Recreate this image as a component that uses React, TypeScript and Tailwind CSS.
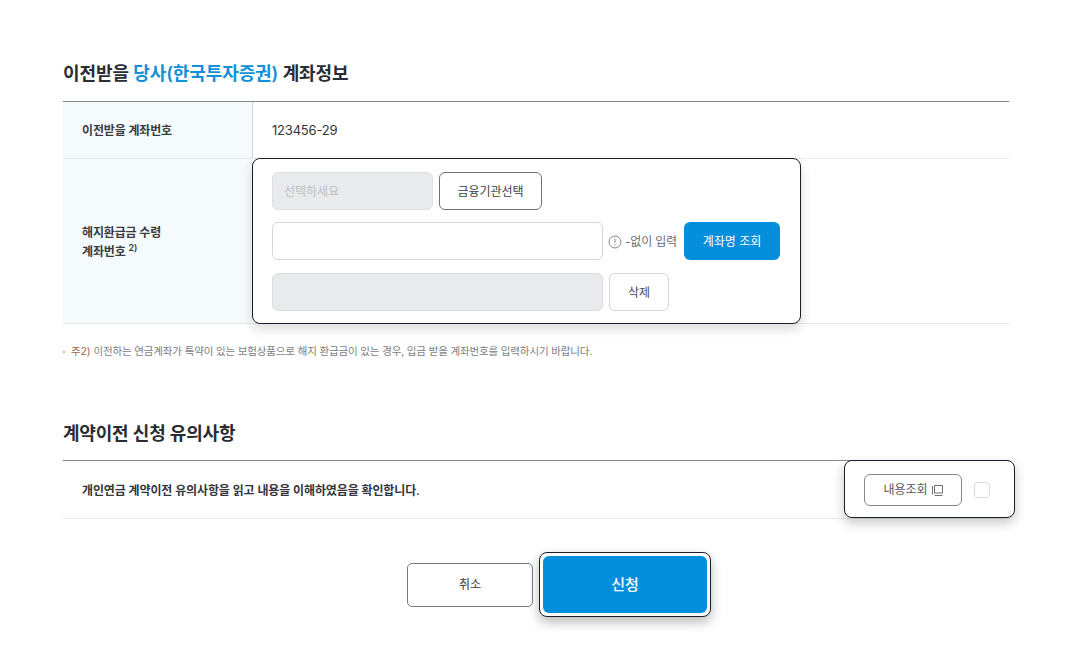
const fontStack = "font-['Inter','Noto_Sans_CJK_KR',sans-serif]";

function InfoIcon() {
  return (
    <svg width="14" height="14" viewBox="0 0 14 14" fill="none" className="shrink-0">
      <circle cx="7" cy="7" r="6" stroke="#85888f" strokeWidth="1" />
      <path d="M7 3.6v4.2" stroke="#85888f" strokeWidth="1" />
      <path d="M7 9.2v1.2" stroke="#85888f" strokeWidth="1" />
    </svg>
  );
}

function CopyIcon() {
  return (
    <svg width="11" height="11" viewBox="0 0 11 11" fill="none" className="shrink-0">
      <path d="M0.5 1v8.5" stroke="#70737a" strokeWidth="1" />
      <rect x="2.5" y="0.5" width="8" height="7.5" stroke="#70737a" strokeWidth="1" />
      <path d="M2.5 10.5h8" stroke="#70737a" strokeWidth="1" />
    </svg>
  );
}

export default function App() {
  return (
    <div className={`${fontStack} h-[670px] w-[1072px] overflow-hidden bg-white px-[63px] pt-[60px] text-[#26282e]`}>
      <h2 className="h-[28px] text-[18px] font-semibold leading-[28px] tracking-[-0.1px] text-[#2a2c33]">
        이전받을 <span className="text-[#1290da]">당사(한국투자증권)</span> 계좌정보
      </h2>

      <div className="mt-[13px] w-[946px] border-t border-t-[#85878c]">
        <div className="flex h-[57px] border-b border-b-[#e9ecef]">
          <div className="flex w-[189px] items-center bg-[#f5fafd] pl-[19px] pt-px text-[12px] font-semibold tracking-[-0.15px] text-[#3a3c42]">
            이전받을 계좌번호
          </div>
          <div className="flex flex-1 items-center border-l border-l-[#d5d7da] pl-[19px] pt-[2px] text-[13px] tracking-[-0.2px] text-[#33353b]">
            123456-29
          </div>
        </div>

        <div className="flex h-[165px] border-b border-b-[#e4e6e9]">
          <div className="flex w-[189px] flex-col justify-center bg-[#f5fafd] pt-px pl-[19px] text-[12px] font-semibold leading-[19px] tracking-[-0.15px] text-[#3a3c42]">
            <span>해지환급금 수령</span>
            <span>
              계좌번호 <sup className="text-[9px] leading-none">2)</sup>
            </span>
          </div>

          <div className="relative z-10 -mt-px flex h-[166px] w-[549px] flex-col gap-[12px] rounded-[8px] border border-[#1c1d2b] bg-white pl-[19px] pt-[13px] shadow-[0_5px_12px_rgba(0,0,0,0.15)]">
            <div className="flex gap-[6px]">
              <div className="flex h-[38px] w-[161px] items-center rounded-[6px] border border-[#dfe0e2] bg-[#e9eaec] pl-[11px] pt-px text-[12px] text-[#bcbec2]">
                선택하세요
              </div>
              <button className="h-[38px] w-[103px] rounded-[6px] border border-[#6f7177] bg-white pt-px text-[12px] text-[#3d3f45]">
                금융기관선택
              </button>
            </div>

            <div className="flex items-center">
              <div className="h-[38px] w-[331px] rounded-[6px] border border-[#d5d6d9] bg-white" />
              <div className="ml-[5px] flex w-[76px] items-center gap-[3px] whitespace-nowrap pt-px text-[12px] tracking-[-0.2px] text-[#6a6c72]">
                <InfoIcon />
                <span>-없이 입력</span>
              </div>
              <button className="h-[38px] w-[96px] rounded-[6px] bg-[#058edc] pt-px text-[12px] text-white">
                계좌명 조회
              </button>
            </div>

            <div className="mt-px flex gap-[6px]">
              <div className="h-[38px] w-[331px] rounded-[6px] border border-[#dcdde0] bg-[#e9eaec]" />
              <button className="h-[38px] w-[60px] rounded-[6px] border border-[#d5d6d9] bg-white pt-px text-[12px] text-[#4a4c52]">
                삭제
              </button>
            </div>
          </div>
        </div>
      </div>

      <p className="mt-[20px] flex h-[16px] items-center text-[10.5px] tracking-[-0.15px] text-[#7b7d83]">
        <span className="mr-[6px] h-[2px] w-[2px] rounded-full bg-[#9a9ca1]" />
        <span className="mr-[3px] text-[#a3663c]">주2)</span>
        이전하는 연금계좌가 특약이 있는 보험상품으로 해지 환급금이 있는 경우, 입금 받을 계좌번호를 입력하시기 바랍니다.
      </p>

      <h2 className="mt-[60px] h-[28px] text-[18px] font-semibold leading-[28px] tracking-[-0.2px] text-[#2a2c33]">
        계약이전 신청 유의사항
      </h2>

      <div className="mt-[12px] flex h-[59px] w-[946px] items-center justify-between border-y border-t-[#85878c] border-b-[#e9ecef]">
        <span className="pl-[19px] pt-[2px] text-[12px] font-semibold tracking-[-0.12px] text-[#33353b]">
          개인연금 계약이전 유의사항을 읽고 내용을 이해하였음을 확인합니다.
        </span>
        <div className="relative z-10 -mr-[6px] -mt-px flex h-[58px] w-[171px] items-center self-start rounded-[8px] border border-[#1c1d2b] bg-white pl-[19px] pt-[2px] shadow-[0_5px_12px_rgba(0,0,0,0.22)]">
          <button className="flex h-[32px] w-[98px] items-center justify-center gap-[4px] rounded-[6px] border border-[#85878c] bg-white text-[12px] text-[#55575d]">
            내용조회 <CopyIcon />
          </button>
          <span className="ml-[12px] h-[16px] w-[16px] rounded-[4px] border border-[#d8d9dc] bg-white" />
        </div>
      </div>

      <div className="mt-[33px] flex items-center justify-center gap-[6px] pl-[46px]">
        <button className="h-[44px] w-[126px] rounded-[5px] border border-[#77797f] bg-white pt-px text-[12px] font-medium text-[#55575d]">
          취소
        </button>
        <div className="rounded-[8px] border border-[#1c1d2b] bg-white p-[3px] shadow-[0_5px_12px_rgba(0,0,0,0.28)]">
          <button className="block h-[57px] w-[164px] rounded-[6px] bg-[#058edc] pt-px text-[15px] font-medium text-white">
            신청
          </button>
        </div>
      </div>
    </div>
  );
}
